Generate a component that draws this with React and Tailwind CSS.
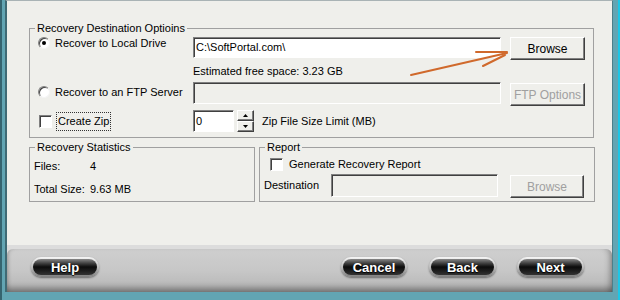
const sunken =
  "border border-t-[#808080] border-l-[#808080] border-b-white border-r-white shadow-[inset_1px_1px_0_#404040]";
const raised =
  "border border-t-white border-l-white border-b-[#404040] border-r-[#404040] shadow-[inset_-1px_-1px_0_#808080]";

function Radio({ checked }) {
  return (
    <span className="flex h-[12px] w-[12px] shrink-0 items-center justify-center rounded-full border border-t-[#808080] border-l-[#808080] border-b-[#f4f4f4] border-r-[#f4f4f4] bg-white shadow-[inset_1px_1px_0_#404040]">
      {checked && <span className="h-[4px] w-[4px] rounded-full bg-black" />}
    </span>
  );
}

function Check() {
  return <span className={`block h-[13px] w-[13px] shrink-0 bg-white ${sunken}`} />;
}

function Button({ label, disabled, className }) {
  return (
    <div
      className={`flex items-center justify-center bg-[#efefeb] text-[12px] ${raised} ${
        disabled ? "text-[#a0a0a0]" : "text-black"
      } ${className}`}
    >
      {label}
    </div>
  );
}

function Group({ title, className, children }) {
  return (
    <fieldset className={`border border-[#a0a0a0] ${className}`}>
      <legend className="ml-[5px] px-[2px] text-[11px] leading-[14px]">{title}</legend>
      {children}
    </fieldset>
  );
}

function Pill({ label, className }) {
  return (
    <div
      className={`h-[20px] rounded-full bg-gradient-to-b from-[#f6f6f6] via-[#bdbdbd] to-[#7e7e7e] p-[2px] shadow-[0_1px_2px_rgba(0,0,0,0.45)] ${className}`}
    >
      <div className="flex h-full items-center justify-center rounded-full bg-gradient-to-b from-[#888] via-[#0c0c0c] to-[#333] text-[13px] font-bold leading-none text-white [text-shadow:0_1px_1px_#000]">
        {label}
      </div>
    </div>
  );
}

function Spinner() {
  const arrow = (up) => (
    <div className={`flex h-[11px] w-[17px] items-center justify-center bg-[#efefeb] ${raised}`}>
      <svg width="5" height="3" viewBox="0 0 5 3">
        <path d={up ? "M2.5 0 L5 3 L0 3 Z" : "M0 0 L5 0 L2.5 3 Z"} fill="#000" />
      </svg>
    </div>
  );
  return (
    <div className="ml-[3px] flex flex-col">
      {arrow(true)}
      {arrow(false)}
    </div>
  );
}

export default function App() {
  return (
    <div className="relative h-[300px] w-[620px] border-l-2 border-r-2 border-l-[#36646f] border-r-[#1cc6e6] bg-[#62a5b3] pl-[3px] pr-[5px] pb-[8px] font-['Liberation_Sans',Arial,sans-serif] text-black">
      <div className="flex h-full flex-col border-l-2 border-r border-t border-l-[#3f6a74] border-r-[#4b7f8a] border-t-[#a9b3b5] bg-[#efefeb]">
        <div className="flex-1 pl-[22px] pt-[20px]">
          <Group title="Recovery Destination Optioins" className="h-[117px] w-[565px]">
            <div className="pl-[8px] pt-[2px] text-[11px]">
              <div className="flex h-[23px]">
                <div className="flex w-[155px] items-start">
                  <Radio checked />
                  <span className="ml-[5px] leading-[13px]">Recover to Local Drive</span>
                </div>
                <div className={`h-[21px] w-[308px] bg-white pl-[2px] leading-[19px] ${sunken}`}>C:\SoftPortal.com\</div>
                <Button label="Browse" className="ml-[9px] h-[23px] w-[75px]" />
              </div>
              <div className="flex h-[22px] items-center pl-[155px]">Estimated free space: 3.23 GB</div>
              <div className="flex h-[25px]">
                <div className="flex w-[155px] items-start pt-[4px]">
                  <Radio />
                  <span className="ml-[5px] leading-[13px]">Recover to an FTP Server</span>
                </div>
                <div className={`h-[22px] w-[308px] bg-[#efefeb] ${sunken}`} />
                <Button label="FTP Options" disabled className="ml-[9px] mt-[1px] h-[23px] w-[75px]" />
              </div>
              <div className="mt-[3px] flex h-[22px] items-center">
                <div className="flex w-[155px] items-center">
                  <span className="ml-[1px]">
                    <Check />
                  </span>
                  <span className="ml-[4px] flex h-[19px] items-center border border-dotted border-[#333] px-[1px]">
                    Create Zip
                  </span>
                </div>
                <div className={`h-[22px] w-[41px] bg-white pl-[2px] leading-[20px] ${sunken}`}>0</div>
                <Spinner />
                <span className="ml-[8px]">Zip File Size Limit (MB)</span>
              </div>
            </div>
          </Group>
          <div className="mt-[2px] flex">
            <Group title="Recovery Statistics" className="h-[62px] w-[226px]">
              <div className="pl-[4px] text-[11px] leading-[14px]">
                <div className="mt-[5px] flex">
                  <span className="w-[56px]">Files:</span>
                  <span>4</span>
                </div>
                <div className="mt-[9px] flex">
                  <span className="w-[56px]">Total Size:</span>
                  <span>9.63 MB</span>
                </div>
              </div>
            </Group>
            <Group title="Report" className="ml-[4px] h-[62px] w-[336px]">
              <div className="pl-[4px] text-[11px]">
                <div className="mt-[3px] flex h-[15px] items-center pl-[6px]">
                  <Check />
                  <span className="ml-[6px]">Generate Recovery Report</span>
                </div>
                <div className="mt-[2px] flex h-[24px]">
                  <span className="flex h-[23px] w-[67px] items-center">Destination</span>
                  <div className={`h-[23px] w-[167px] bg-[#efefeb] ${sunken}`} />
                  <Button label="Browse" disabled className="ml-[12px] mt-[1px] h-[23px] w-[74px]" />
                </div>
              </div>
            </Group>
          </div>
        </div>
        <div className="h-[47px] bg-[#dcdcdc] pt-[4px]">
          <div className="flex h-full items-start rounded-t-[6px] bg-gradient-to-b from-[#cfcfcf] via-[#c7c7c7] to-[#b4b4b4] pt-[8px] shadow-[inset_0_-7px_6px_-3px_rgba(0,0,0,0.35),inset_-6px_0_6px_-4px_rgba(0,0,0,0.3),inset_4px_0_4px_-3px_rgba(0,0,0,0.2)]">
            <Pill label="Help" className="ml-[24px] w-[68px]" />
            <div className="flex-1" />
            <Pill label="Cancel" className="w-[66px]" />
            <Pill label="Back" className="ml-[22px] w-[67px]" />
            <Pill label="Next" className="ml-[21px] mr-[28px] w-[67px]" />
          </div>
        </div>
      </div>
      <svg
        className="pointer-events-none absolute left-[-2px] top-0"
        width="620"
        height="300"
        viewBox="0 0 620 300"
      >
        <g stroke="#d0692c" strokeWidth="2" fill="none" strokeLinecap="round">
          <path d="M411 75 L507 53" />
          <path d="M476 52 L507 52" />
          <path d="M483 66 L505 55" />
        </g>
      </svg>
    </div>
  );
}
